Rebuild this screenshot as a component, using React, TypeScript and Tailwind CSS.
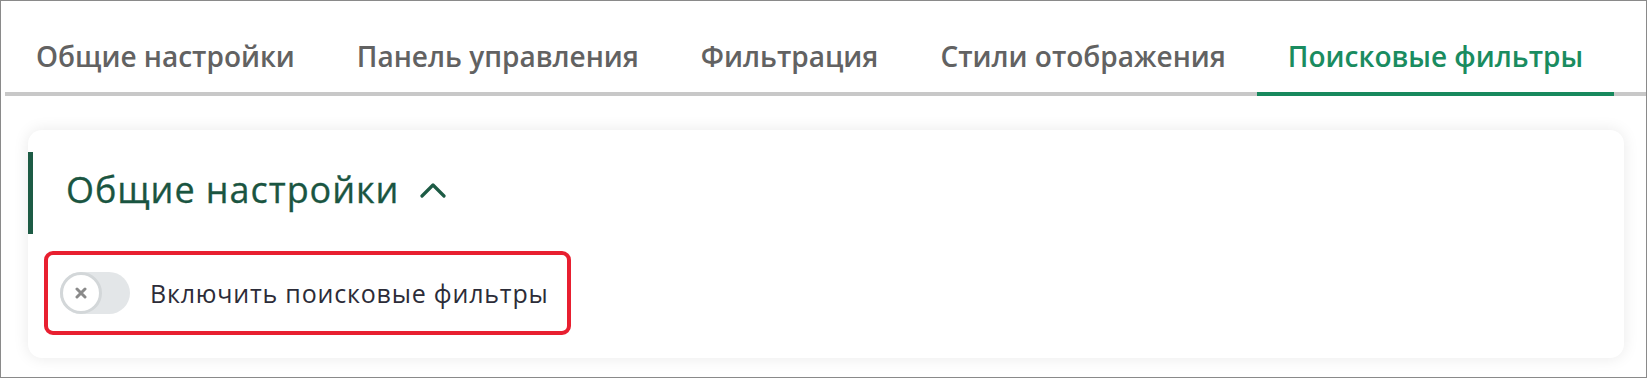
import { useState } from "react"

const tabs = ["Общие настройки", "Панель управления", "Фильтрация", "Стили отображения", "Поисковые фильтры"]

export default function App() {
  const [active, setActive] = useState(4)
  const [open, setOpen] = useState(true)
  const [enabled, setEnabled] = useState(false)

  return (
    <div className="w-[1648px] h-[380px] bg-white" style={{ fontFamily: '"Open Sans", "Noto Sans", sans-serif' }}>
      <div className="w-[1647px] h-[378px] border border-[#8a8a8a] bg-white overflow-hidden">
        {/* tabs */}
        <div className="ml-[4px] flex border-b-4 border-[#c8c8c8]">
          {tabs.map((t, i) => (
            <button
              key={t}
              onClick={() => setActive(i)}
              className={`-mb-1 px-[31px] pt-[36px] pb-[17px] text-[28px] font-semibold leading-[38px] border-b-4 ${
                i === active ? "text-[#1a8c60] border-[#17895d]" : "text-[#626262] border-transparent"
              }`}
            >
              {t}
            </button>
          ))}
        </div>

        {/* card */}
        <div className="mt-[34px] ml-[27px] w-[1596px] h-[228px] rounded-[14px] bg-white shadow-[0_0_16px_rgba(0,0,0,0.09)] pt-[22px]">
          <div className="flex items-center border-l-[5px] border-[#1d5b45] h-[82px] pl-[33px] pb-[8px]">
            <span className="text-[36px] tracking-[0.95px] leading-[49px] text-[#1a5541] [-webkit-text-stroke:0.3px_#1a5541]">Общие настройки</span>
            <button onClick={() => setOpen(!open)} className="ml-[21px] mt-[2px]">
              <svg width="26" height="16" viewBox="0 0 26 16" fill="none">
                <polyline
                  points={open ? "2,14 13,3 24,14" : "2,3 13,14 24,3"}
                  stroke="#1d5b45"
                  strokeWidth="3.2"
                  strokeLinecap="round"
                  strokeLinejoin="round"
                />
              </svg>
            </button>
          </div>

          {open && (
            <div className="mt-[17px] ml-[16px] inline-flex items-center h-[84px] border-4 border-[#e81f30] rounded-[9px] pl-[12px] pr-[18px]">
              <button
                onClick={() => setEnabled(!enabled)}
                className={`relative w-[70px] h-[42px] rounded-full ${enabled ? "bg-[#9fd3bd]" : "bg-[#e3e6e8]"}`}
              >
                <span
                  className={`absolute top-0 ${enabled ? "left-[28px]" : "left-0"} w-[42px] h-[42px] rounded-full bg-white border-[3px] border-[#d3d7d9] flex items-center justify-center`}
                >
                  <svg width="12" height="12" viewBox="0 0 12 12">
                    <path d="M2 2 L10 10 M10 2 L2 10" stroke="#8a8a8a" strokeWidth="3" strokeLinecap="round" />
                  </svg>
                </span>
              </button>
              <span className="ml-[20px] text-[25px] tracking-[0.8px] leading-[34px] text-[#2c2c38]">Включить поисковые фильтры</span>
            </div>
          )}
        </div>
      </div>
    </div>
  )
}
